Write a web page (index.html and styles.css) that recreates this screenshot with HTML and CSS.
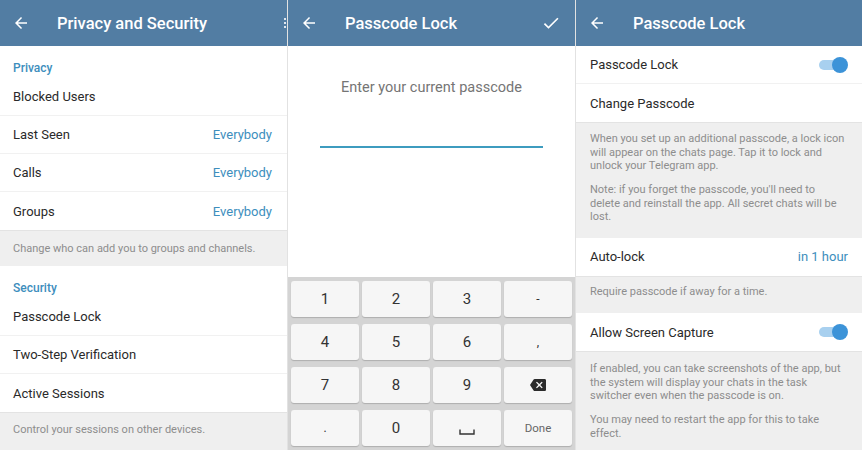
FILE: index.html
```html
<!DOCTYPE html>
<html lang="en">
  <head>
    <meta charset="UTF-8" />
    <title>Passcode Lock</title>
    <link rel="stylesheet" href="styles.css">
  </head>
  <body>
    <div class="screens">
      <!-- Privacy and Security -->
      <div class="screen">
        <div class="topbar">
          <svg class="back" viewBox="0 0 24 24"><path d="M20 11H7.83l5.59-5.59L12 4l-8 8 8 8 1.41-1.41L7.83 13H20v-2z"/></svg>
          <span class="title">Privacy and Security</span>
          <span class="menu"><i></i><i></i><i></i></span>
        </div>
        <div class="section">
          <div class="section-title">Privacy</div>
          <div class="row">Blocked Users</div>
          <div class="row">Last Seen <span class="value">Everybody</span></div>
          <div class="row">Calls <span class="value">Everybody</span></div>
          <div class="row last">Groups <span class="value">Everybody</span></div>
        </div>
        <div class="info short">Change who can add you to groups and channels.</div>
        <div class="section">
          <div class="section-title sec">Security</div>
          <div class="row">Passcode Lock</div>
          <div class="row">Two-Step Verification</div>
          <div class="row last">Active Sessions</div>
        </div>
        <div class="info short">Control your sessions on other devices.</div>
      </div>

      <!-- Enter passcode -->
      <div class="screen entry">
        <div class="topbar">
          <svg class="back" viewBox="0 0 24 24"><path d="M20 11H7.83l5.59-5.59L12 4l-8 8 8 8 1.41-1.41L7.83 13H20v-2z"/></svg>
          <span class="title">Passcode Lock</span>
          <svg class="check" viewBox="0 0 24 24"><path d="M9 16.17L4.83 12l-1.42 1.41L9 19 21 7l-1.41-1.41z"/></svg>
        </div>
        <div class="prompt">
          <div class="prompt-text">Enter your current passcode</div>
          <div class="prompt-line"></div>
        </div>
        <div class="keypad">
          <div class="key">1</div>
          <div class="key">2</div>
          <div class="key">3</div>
          <div class="key small">-</div>
          <div class="key">4</div>
          <div class="key">5</div>
          <div class="key">6</div>
          <div class="key small">,</div>
          <div class="key">7</div>
          <div class="key">8</div>
          <div class="key">9</div>
          <div class="key">
            <svg class="bksp" viewBox="0 0 24 24"><path d="M22 3H7c-.69 0-1.230.35-1.59.88L0 12l5.41 8.11c.36.53.9.89 1.59.89h15c1.1 0 2-.9 2-2V5c0-1.1-.9-2-2-2zm-3 12.59L17.59 17 14 13.41 10.41 17 9 15.59 12.59 12 9 8.41 10.41 7 14 10.59 17.59 7 19 8.410 15.41 12 19 15.59z"/></svg>
          </div>
          <div class="key small">.</div>
          <div class="key">0</div>
          <div class="key">
            <svg class="space" viewBox="0 0 16 6"><path d="M1 0.5V5H15V0.5"/></svg>
          </div>
          <div class="key done">Done</div>
        </div>
      </div>

      <!-- Passcode Lock settings -->
      <div class="screen">
        <div class="topbar">
          <svg class="back" viewBox="0 0 24 24"><path d="M20 11H7.83l5.59-5.59L12 4l-8 8 8 8 1.41-1.41L7.83 13H20v-2z"/></svg>
          <span class="title">Passcode Lock</span>
        </div>
        <div class="section wide">
          <div class="row">Passcode Lock <span class="toggle"></span></div>
          <div class="row last">Change Passcode</div>
        </div>
        <div class="info long">
          <p>When you set up an additional passcode, a lock icon will appear on the chats page. Tap it to lock and unlock your Telegram app.</p>
          <p>Note: if you forget the passcode, you'll need to delete and reinstall the app. All secret chats will be lost.</p>
        </div>
        <div class="section wide">
          <div class="row last">Auto-lock <span class="value">in 1 hour</span></div>
        </div>
        <div class="info long single">
          <p>Require passcode if away for a time.</p>
        </div>
        <div class="section wide">
          <div class="row last">Allow Screen Capture <span class="toggle"></span></div>
        </div>
        <div class="info long fill">
          <p>If enabled, you can take screenshots of the app, but the system will display your chats in the task switcher even when the passcode is on.</p>
          <p>You may need to restart the app for this to take effect.</p>
        </div>
      </div>
    </div>
  </body>
</html>
```

FILE: styles.css
```css
body {
  margin: 0;
  font-family: Roboto, "Noto Sans", sans-serif;
  color: #222;
  background: #fff;
}
.screens {
  display: grid;
  grid-template-columns: 287px 288px 287px;
  width: 862px;
  height: 450px;
  overflow: hidden;
}
.screen {
  display: flex;
  flex-direction: column;
  background: #efefef;
  overflow: hidden;
  border-left: 1px solid #e2e2e2;
}
.screen:first-child {
  border-left: none;
}
.topbar {
  height: 46px;
  flex: none;
  display: flex;
  align-items: center;
  background: #527da3;
  color: #fff;
  padding-left: 12px;
  box-sizing: border-box;
}
.back {
  width: 18px;
  height: 18px;
  fill: #fff;
}
.title {
  margin-left: 27px;
  font-size: 16.5px;
  font-weight: 500;
  flex: 1;
}
.menu {
  display: flex;
  flex-direction: column;
  gap: 2px;
  width: 3px;
}
.menu i {
  display: block;
  width: 2px;
  height: 2px;
  background: #dfe7ef;
}
.check {
  width: 20px;
  height: 20px;
  fill: #fff;
  margin-right: 14px;
}
.section {
  background: #fff;
}
.section-title {
  padding: 14px 13px 2px;
  line-height: 16px;
  font-size: 12px;
  font-weight: 500;
  color: #3d8ebd;
}
.row {
  height: 38px;
  box-sizing: border-box;
  display: flex;
  align-items: center;
  justify-content: space-between;
  padding: 0 15px 0 13px;
  font-size: 13px;
  color: #2a2a2a;
  border-bottom: 1px solid #f1f1f1;
}
.row.last {
  border-bottom: none;
}
.value {
  color: #3d8ebd;
}
.info {
  color: #8d8d8d;
  font-size: 11px;
  border-top: 1px solid #e3e3e3;
}
.info.short {
  height: 36px;
  box-sizing: border-box;
  display: flex;
  align-items: center;
  padding: 0 13px;
  flex: none;
}
.info.short:last-child {
  flex: 1;
  align-items: flex-start;
  padding-top: 10px;
}
.wide .row {
  padding: 0 14px;
}
.info.long {
  padding: 9px 17px 14px 14px;
  line-height: 13.5px;
  font-size: 11px;
}
.info.long p {
  margin: 0;
}
.info.long p + p {
  margin-top: 10.5px;
}
.info.single {
  padding: 8px 14px 15px;
}
.info.fill {
  flex: 1;
  padding-top: 10px;
}
.toggle {
  position: relative;
  width: 28px;
  height: 10px;
  margin-right: 1px;
  border-radius: 5px;
  background: #a8d0ef;
}
.toggle::after {
  content: "";
  position: absolute;
  right: -1px;
  top: -3px;
  width: 16px;
  height: 16px;
  border-radius: 50%;
  background: #3c93d8;
}
.entry {
  background: #fff;
}
.prompt {
  flex: 1;
  display: flex;
  flex-direction: column;
  align-items: center;
}
.prompt-text {
  margin-top: 33px;
  font-size: 14.5px;
  color: #757575;
}
.prompt-line {
  margin-top: 50px;
  width: 223px;
  height: 2px;
  background: #3e9cbf;
}
.keypad {
  flex: none;
  display: grid;
  grid-template-columns: repeat(4, 1fr);
  grid-auto-rows: 36px;
  column-gap: 3px;
  row-gap: 7px;
  padding: 4px 3px;
  background: #d4d4d4;
}
.key {
  display: flex;
  align-items: center;
  justify-content: center;
  background: #f6f6f6;
  border-radius: 3px;
  box-shadow: 0 1px 1px rgba(0, 0, 0, 0.18);
  font-size: 15px;
  color: #333;
}
.key.small {
  font-size: 12px;
}
.key.done {
  font-size: 11.5px;
  color: #666;
}
.bksp {
  width: 16px;
  height: 16px;
  fill: #2b2b2b;
}
.space {
  width: 16px;
  height: 6px;
  margin-top: 8px;
  fill: none;
  stroke: #333;
  stroke-width: 1.4;
}
```
